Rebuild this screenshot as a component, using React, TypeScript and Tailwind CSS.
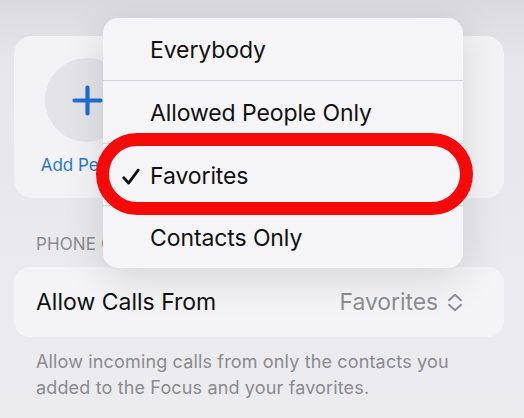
import React from "react";

const font = { fontFamily: "Inter, 'Noto Sans', 'Liberation Sans', sans-serif" };

function PlusIcon() {
  return (
    <svg width="31" height="31" viewBox="0 0 31 31" fill="none">
      <path d="M15.5 2.5v26M2.5 15.5h26" stroke="#1f6fd6" strokeWidth="4.2" strokeLinecap="round" />
    </svg>
  );
}

function CheckIcon() {
  return (
    <svg width="18" height="17" viewBox="0 0 18 17" fill="none">
      <path d="M1.8 9.2 L6.6 14.6 L16.2 1.6" stroke="#111" strokeWidth="2.8" strokeLinecap="round" strokeLinejoin="round" />
    </svg>
  );
}

function UpDownIcon() {
  return (
    <svg width="18" height="19" viewBox="0 0 18 19" fill="none">
      <path d="M3 7.2 L9 1.8 L15 7.2 M3 11.8 L9 17.2 L15 11.8" stroke="#8e8e93" strokeWidth="2" strokeLinecap="round" strokeLinejoin="round" />
    </svg>
  );
}

const options = ["Everybody", "Allowed People Only", "Favorites", "Contacts Only"];

export default function App() {
  return (
    <div
      style={font}
      className="relative w-[524px] h-[418px] overflow-hidden bg-[linear-gradient(180deg,#d9d9de_0%,#e6e6ea_14%,#eaeaee_60%,#ececef_100%)] antialiased"
    >
      <div className="flex flex-col pt-[36px] pl-[14px] pr-[20px]">
        {/* People card */}
        <div className="h-[162px] rounded-[18px] bg-[#f3f3f5] flex pt-[22px] pl-[31px]">
          <div className="flex flex-col items-center w-[84px]">
            <div className="w-[84px] h-[84px] rounded-full bg-[#e4e4e8] flex items-center justify-center">
              <PlusIcon />
            </div>
            <div className="mt-[13px] text-[17px] leading-[20px] text-[#2a76d2] whitespace-nowrap">Add People</div>
          </div>
        </div>

        {/* Section header */}
        <div className="mt-[36px] pl-[22px] text-[17px] leading-[20px] tracking-[0.1px] text-[#8a8a8f]">PHONE CALLS</div>

        {/* Allow calls row */}
        <div className="mt-[13px] h-[70px] rounded-[16px] bg-[#f4f4f6] flex items-center pl-[22px] pr-[40px]">
          <span className="text-[23px] text-[#111] tracking-[0px]">Allow Calls From</span>
          <span className="ml-auto flex items-center gap-[8px] text-[23px] text-[#8e8e93] tracking-[-0.1px]">
            Favorites
            <UpDownIcon />
          </span>
        </div>

        {/* Footer */}
        <p className="mt-[12px] pl-[22px] text-[18px] leading-[26px] tracking-[0.15px] text-[#8a8a8f]">
          Allow incoming calls from only the contacts you
          <br />
          added to the Focus and your favorites.
        </p>
      </div>

      {/* Pop-up menu */}
      <div className="absolute left-[103px] top-[18px] w-[360px] h-[250px] rounded-[15px] bg-[#f5f5f7] shadow-[0_10px_40px_rgba(0,0,0,0.13)] overflow-hidden flex flex-col">
        {options.map((label, i) => (
          <div
            key={label}
            className={`relative flex-1 flex items-center pt-[3px] pl-[47px] text-[23px] text-[#111] tracking-[-0.1px] ${i < options.length - 1 ? "border-b border-[#d4d4d8]" : ""}`}
          >
            {label === "Favorites" && (
              <span className="absolute left-[19px] top-1/2 -translate-y-1/2 mt-[3px]">
                <CheckIcon />
              </span>
            )}
            {label}
          </div>
        ))}
      </div>

      {/* Highlight ring */}
      <div className="absolute left-[96px] top-[133px] w-[377px] h-[82px] rounded-full border-[13px] border-[#f50a0a]" />
    </div>
  );
}
